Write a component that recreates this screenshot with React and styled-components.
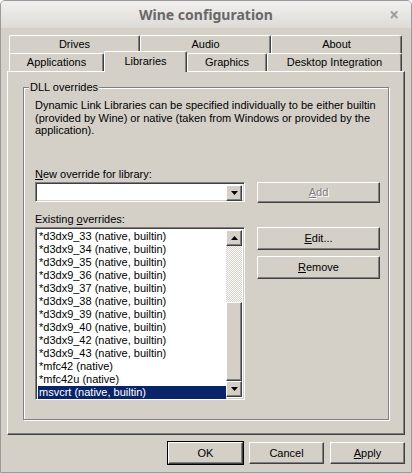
import styled, { createGlobalStyle } from 'styled-components';

const face = '#d4d0c8';
const shadow = '#808080';
const darkShadow = '#404040';

const GlobalStyle = createGlobalStyle`
  html, body {
    margin: 0;
    padding: 0;
    background: #ffffff;
  }
  body {
    font-family: "Liberation Sans", Arial, sans-serif;
    font-size: 11px;
    color: #000;
  }
`;

const Window = styled.div`
  width: 412px;
  height: 473px;
  box-sizing: border-box;
  border: 1px solid #9a9a9a;
  border-radius: 5px 5px 0 0;
  overflow: hidden;
  display: flex;
  flex-direction: column;
  background: ${face};
`;

const TitleBar = styled.div`
  height: 27px;
  flex: none;
  display: flex;
  align-items: center;
  justify-content: center;
  position: relative;
  background: linear-gradient(#f1f0ef, #dddbd6);
  font-family: "Noto Sans", "DejaVu Sans", sans-serif;
  font-weight: bold;
  font-size: 14px;
  color: #686868;
`;

const Close = styled.span`
  position: absolute;
  right: 12px;
  top: 2px;
  font-size: 17px;
  color: #9c9c9c;
  font-weight: bold;
`;

const Body = styled.div`
  flex: 1;
  display: flex;
  flex-direction: column;
  padding: 7px 6px 0 6px;
`;

const TabRows = styled.div`
  display: flex;
  flex-direction: column;
  margin: 0 3px 0 2px;
`;

const TabRow = styled.div`
  display: flex;
  height: 18px;
`;

const Tab = styled.div`
  box-sizing: border-box;
  flex: ${(p) => (p.$w ? `0 0 ${p.$w}px` : '1')};
  border-top: 1px solid #fff;
  border-left: 1px solid #fff;
  border-right: 1px solid ${darkShadow};
  box-shadow: inset -1px 0 0 ${shadow};
  border-radius: 2px 2px 0 0;
  display: flex;
  align-items: center;
  justify-content: center;
  padding-bottom: 1px;
  background: ${face};
  position: relative;
  ${(p) =>
    p.$active &&
    `
    margin-top: -2px;
    height: 21px;
    z-index: 1;
    padding-bottom: 3px;
  `}
`;

const Panel = styled.div`
  position: relative;
  height: 364px;
  box-sizing: border-box;
  border-top: 1px solid #fff;
  border-left: 1px solid #fff;
  border-right: 1px solid ${darkShadow};
  border-bottom: 1px solid ${darkShadow};
  box-shadow: inset -1px -1px 0 ${shadow};
  padding: 15px 15px 14px 15px;
  display: flex;
`;

const Group = styled.div`
  position: relative;
  flex: 1;
  border: 1px solid ${shadow};
  box-shadow: 1px 1px 0 #fff, inset 1px 1px 0 #fff;
  padding: 11px 8px 0 11px;
  display: flex;
  flex-direction: column;
`;

const GroupLabel = styled.span`
  position: absolute;
  left: 5px;
  top: -7px;
  background: ${face};
  padding: 0 1px;
  line-height: 13px;
`;

const Desc = styled.div`
  line-height: 12.5px;
  white-space: nowrap;
`;

const FieldLabel = styled.div`
  line-height: 13px;
  margin-top: ${(p) => p.$top}px;
  margin-bottom: 1px;
`;

const Row = styled.div`
  display: flex;
  gap: 12px;
  align-items: flex-start;
`;

const sunken = `
  box-sizing: border-box;
  border-top: 1px solid ${shadow};
  border-left: 1px solid ${shadow};
  border-right: 1px solid #fff;
  border-bottom: 1px solid #fff;
  box-shadow: inset 1px 1px 0 ${darkShadow}, inset -1px -1px 0 ${face};
`;

const raised = `
  box-sizing: border-box;
  background: ${face};
  border-top: 1px solid #fff;
  border-left: 1px solid #fff;
  border-right: 1px solid ${darkShadow};
  border-bottom: 1px solid ${darkShadow};
  box-shadow: inset -1px -1px 0 ${shadow};
`;

const Combo = styled.div`
  ${sunken}
  width: 210px;
  height: 20px;
  background: #fff;
  padding: 2px;
  display: flex;
  justify-content: flex-end;
`;

const ArrowButton = styled.div`
  ${raised}
  width: 16px;
  height: ${(p) => p.$h || 16}px;
  flex: none;
  display: flex;
  align-items: center;
  justify-content: center;
`;

const Button = styled.div`
  ${raised}
  width: ${(p) => p.$w || 123}px;
  height: ${(p) => p.$h || 23}px;
  display: flex;
  align-items: center;
  justify-content: center;
  color: ${(p) => (p.$disabled ? shadow : '#000')};
  text-shadow: ${(p) => (p.$disabled ? '1px 1px 0 #fff' : 'none')};
  ${(p) =>
    p.$default &&
    `
    outline: 1px solid #000;
    outline-offset: 0;
  `}
`;

const Side = styled.div`
  display: flex;
  flex-direction: column;
  gap: 6px;
`;

const List = styled.div`
  ${sunken}
  width: 210px;
  height: 173px;
  background: #fff;
  padding: 2px;
  display: flex;
`;

const Items = styled.div`
  flex: 1;
  display: flex;
  flex-direction: column;
`;

const Item = styled.div`
  height: 13px;
  line-height: 13px;
  padding-left: 1px;
  white-space: nowrap;
  background: ${(p) => (p.$selected ? '#0a246a' : 'transparent')};
  color: ${(p) => (p.$selected ? '#fff' : '#000')};
`;

const ScrollBar = styled.div`
  width: 16px;
  display: flex;
  flex-direction: column;
`;

const Track = styled.div`
  height: 56px;
  background-image: repeating-conic-gradient(${face} 0 25%, #fff 0 50%);
  background-size: 2px 2px;
`;

const Thumb = styled.div`
  ${raised}
  flex: 1;
`;

const Footer = styled.div`
  display: flex;
  justify-content: flex-end;
  gap: 6px;
  margin-top: 7px;
`;

const U = styled.span`
  text-decoration: underline;
  text-underline-offset: 1px;
`;

function Arrow({ up }) {
  return (
    <svg width="7" height="4" viewBox="0 0 7 4">
      <path d={up ? 'M3.5 0 L7 4 L0 4 Z' : 'M0 0 L7 0 L3.5 4 Z'} fill="#000" />
    </svg>
  );
}

const overrides = [
  '*d3dx9_33 (native, builtin)',
  '*d3dx9_34 (native, builtin)',
  '*d3dx9_35 (native, builtin)',
  '*d3dx9_36 (native, builtin)',
  '*d3dx9_37 (native, builtin)',
  '*d3dx9_38 (native, builtin)',
  '*d3dx9_39 (native, builtin)',
  '*d3dx9_40 (native, builtin)',
  '*d3dx9_42 (native, builtin)',
  '*d3dx9_43 (native, builtin)',
  '*mfc42 (native)',
  '*mfc42u (native)',
  'msvcrt (native, builtin)',
];

export default function App() {
  return (
    <>
      <GlobalStyle />
      <Window>
        <TitleBar>
          Wine configuration
          <Close>×</Close>
        </TitleBar>
        <Body>
          <TabRows>
            <TabRow>
              <Tab>Drives</Tab>
              <Tab>Audio</Tab>
              <Tab>About</Tab>
            </TabRow>
            <TabRow>
              <Tab $w={95}>Applications</Tab>
              <Tab $w={83} $active>Libraries</Tab>
              <Tab $w={80}>Graphics</Tab>
              <Tab>Desktop Integration</Tab>
            </TabRow>
          </TabRows>
          <Panel>
            <Group>
              <GroupLabel>DLL overrides</GroupLabel>
              <Desc>
                Dynamic Link Libraries can be specified individually to be either builtin
                <br />
                (provided by Wine) or native (taken from Windows or provided by the
                <br />
                application).
              </Desc>
              <FieldLabel $top={31}>
                <U>N</U>ew override for library:
              </FieldLabel>
              <Row>
                <Combo>
                  <ArrowButton>
                    <Arrow />
                  </ArrowButton>
                </Combo>
                <Button $h={21} $disabled>
                  <U>A</U>dd
                </Button>
              </Row>
              <FieldLabel $top={10}>
                Existing <U>o</U>verrides:
              </FieldLabel>
              <Row>
                <List>
                  <Items>
                    {overrides.map((o, i) => (
                      <Item key={o} $selected={i === overrides.length - 1}>
                        {o}
                      </Item>
                    ))}
                  </Items>
                  <ScrollBar>
                    <ArrowButton>
                      <Arrow up />
                    </ArrowButton>
                    <Track />
                    <Thumb />
                    <ArrowButton>
                      <Arrow />
                    </ArrowButton>
                  </ScrollBar>
                </List>
                <Side>
                  <Button>
                    <U>E</U>dit...
                  </Button>
                  <Button>
                    <U>R</U>emove
                  </Button>
                </Side>
              </Row>
            </Group>
          </Panel>
          <Footer>
            <Button $w={75} $h={22} $default>
              OK
            </Button>
            <Button $w={75} $h={22}>
              Cancel
            </Button>
            <Button $w={75} $h={22}>
              <U>A</U>pply
            </Button>
          </Footer>
        </Body>
      </Window>
    </>
  );
}
